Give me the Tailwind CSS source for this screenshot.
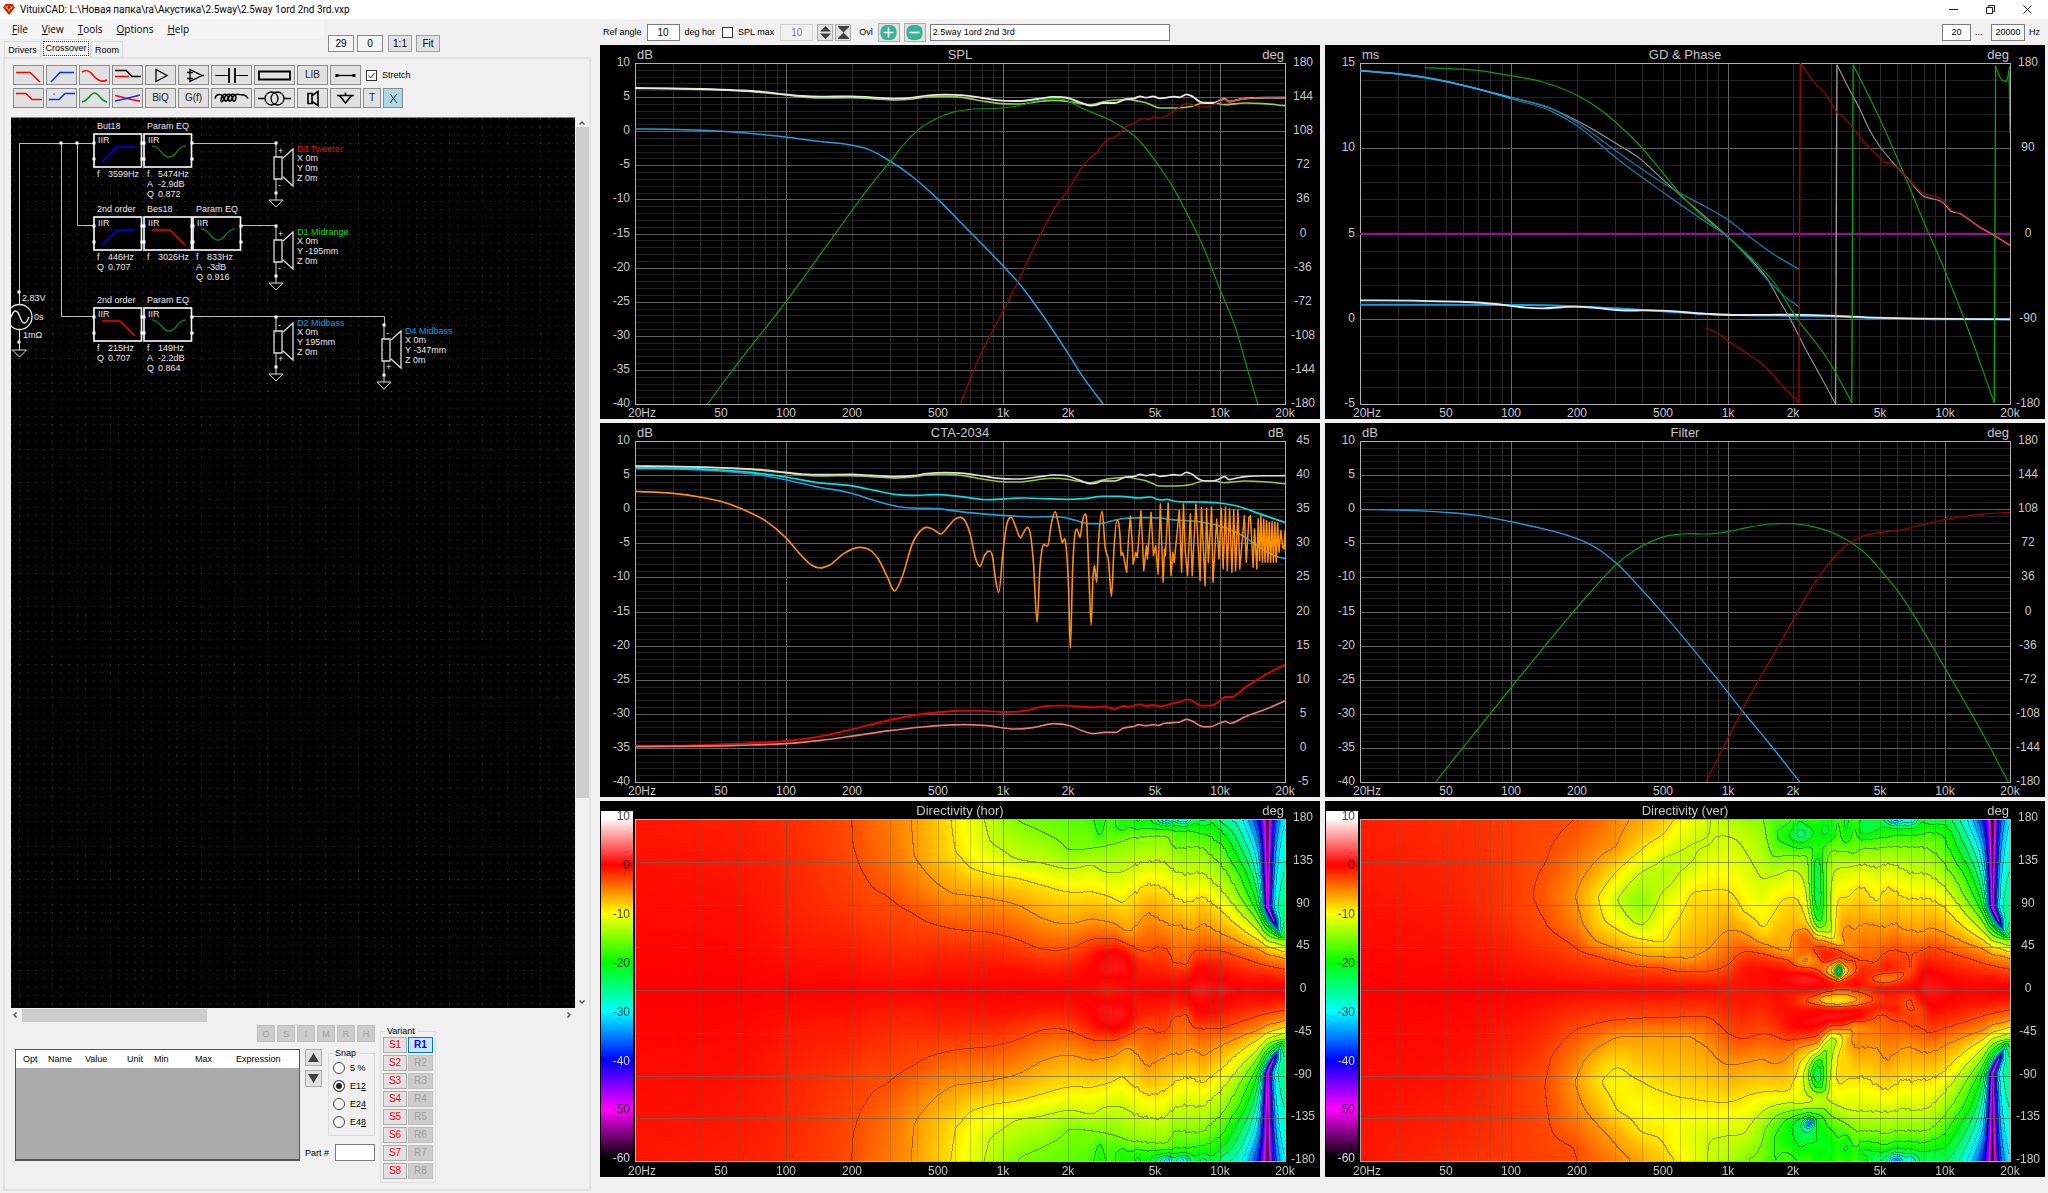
<!DOCTYPE html>
<html lang="en">
<head>
  <meta charset="UTF-8" />
  <meta name="viewport" content="width=device-width, initial-scale=1" />
  <title>VituixCAD</title>
  <script src="https://cdn.jsdelivr.net/npm/@tailwindcss/browser@4"></script>
</head>
<body class="min-h-screen flex flex-col bg-[#f0f0f0] text-black font-['Liberation_Sans',Arial,sans-serif] text-[10px] leading-3">

  <!-- Title bar -->
  <header class="h-[19px] bg-white flex items-center justify-between pl-[3px] pr-4">
    <div class="flex items-center gap-[5px]">
      <svg class="w-3 h-[11px]" viewBox="0 0 12 11"><path d="M2.5 0h7L12 3.5 6 11 0 3.5z" fill="#d81a10"/><path d="M2 2.5h8L8.6 5H3.4z" fill="#ffd21c"/><path d="M4.5 5h3L6 8z" fill="#ffb000"/><path d="M4 3.5L6 2l2 1.5-2 2z" fill="#a01008"/></svg>
      <h1 class="text-[10px] font-['Roboto',sans-serif]">VituixCAD: L:\Новая папка\ra\Акустика\2.5way\2.5way 1ord 2nd 3rd.vxp</h1>
    </div>
    <div class="flex items-center gap-7">
      <button aria-label="Minimize"><svg class="w-[9px] h-[9px]" viewBox="0 0 9 9"><path d="M0 4.5h9" stroke="#222"/></svg></button>
      <button aria-label="Restore"><svg class="w-[9px] h-[9px]" viewBox="0 0 9 9" fill="none" stroke="#222"><path d="M.5 2.5h6v6h-6zM2.5 2.5v-2h6v6h-2"/></svg></button>
      <button aria-label="Close"><svg class="w-[9px] h-[9px]" viewBox="0 0 9 9"><path d="M.5.5l8 8M8.5.5l-8 8" stroke="#222"/></svg></button>
    </div>
  </header>

  <div class="flex flex-1">
    <!-- Left pane -->
    <section class="w-[600px] shrink-0 flex flex-col pb-[2px]">
      <div class="flex h-[38px]">
        <div class="w-[324px] flex flex-col">
          <nav class="h-5 bg-[#f4f4f4] flex items-center gap-[14px] pl-3 font-['Open_Sans',sans-serif]">
            <button><u>F</u>ile</button><button><u>V</u>iew</button><button><u>T</u>ools</button><button><u>O</u>ptions</button><button><u>H</u>elp</button>
          </nav>
          <div class="flex items-end flex-1 pl-1 text-[9px]">
            <button class="h-4 w-[37px] border border-b-0 border-[#dcdcdc]">Drivers</button>
            <button class="h-[18px] w-[50px] bg-[#f9f9f9] border border-b-0 border-[#dcdcdc] p-px"><span class="block border border-dotted border-[#333] leading-[13px]">Crossover</span></button>
            <button class="h-4 w-8 border border-b-0 border-[#dcdcdc]">Room</button>
          </div>
        </div>
        <div class="flex items-end gap-[3px] pl-1 pb-[5px]">
          <input aria-label="Columns" value="29" class="w-[26px] h-[17px] border border-[#8a8a8a] bg-[#f4f4f4] text-center">
          <input aria-label="Rows" value="0" class="w-[26px] h-[17px] border border-[#8a8a8a] bg-[#f4f4f4] text-center">
          <button class="w-6 h-[17px] ml-[2px] border border-[#a0a0a0] bg-[#e1e1e1]">1:1</button>
          <button class="w-6 h-[17px] ml-px border border-[#a0a0a0] bg-[#e1e1e1]">Fit</button>
        </div>
      </div>

      <div class="ml-[3px] mr-[9px] flex-1 flex flex-col border-2 border-[#e2e2e2] bg-[#f0f0f0]">
        <!-- Part toolbar -->
        <div class="flex flex-col gap-[3px] pl-2 pt-[6px] pb-[9px]">
          <div id="tools1" class="flex items-center gap-[2px]"></div>
          <div id="tools2" class="flex items-center gap-[2px]"></div>
        </div>

        <!-- Schematic -->
        <div class="flex flex-1 pl-[6px]">
          <div class="flex-1 bg-black relative overflow-hidden border-t border-[#808080]">
            <svg id="schematic" class="absolute inset-0 w-full h-full" viewBox="11 118 565 890" preserveAspectRatio="xMinYMin slice"></svg>
          </div>
          <div class="w-[14px] flex flex-col items-center justify-between py-[2px]">
            <svg class="w-2 h-2" viewBox="0 0 8 8"><path d="M1.5 5.5L4 3l2.5 2.5" fill="none" stroke="#555" stroke-width="1.5"/></svg>
            <div class="w-[13px] flex-1 flex flex-col"><div class="h-[77%] bg-[#cdcdcd]"></div></div>
            <svg class="w-2 h-2" viewBox="0 0 8 8"><path d="M1.5 2.5L4 5l2.5-2.5" fill="none" stroke="#555" stroke-width="1.5"/></svg>
          </div>
        </div>
        <div class="h-[14px] pl-[6px] pr-4 flex items-center">
          <svg class="w-2 h-2 mr-[3px]" viewBox="0 0 8 8"><path d="M5.5 1.5L3 4l2.5 2.5" fill="none" stroke="#555" stroke-width="1.5"/></svg>
          <div class="flex-1"><div class="w-[34%] h-[13px] bg-[#cdcdcd]"></div></div>
          <svg class="w-2 h-2" viewBox="0 0 8 8"><path d="M2.5 1.5L5 4 2.5 6.5" fill="none" stroke="#555" stroke-width="1.5"/></svg>
        </div>

        <!-- Part values, snap, variants -->
        <div class="flex items-start gap-[5px] pl-[10px] pt-[3px] pb-[6px] text-[9px]">
          <div class="w-[360px]">
            <div id="modes" class="flex justify-end gap-[2px]"></div>
            <div class="flex gap-[5px] pt-[7px]">
              <div class="w-[285px] h-[112px] border border-[#555] border-b-2 bg-[#ababab]">
                <table class="w-full bg-white table-fixed">
                  <thead>
                    <tr class="h-[18px] text-left">
                      <th class="font-normal w-8 pl-[7px]">Opt</th><th class="font-normal w-[37px]">Name</th><th class="font-normal w-[42px]">Value</th><th class="font-normal w-[27px]">Unit</th><th class="font-normal w-[41px]">Min</th><th class="font-normal w-[41px]">Max</th><th class="font-normal">Expression</th>
                    </tr>
                  </thead>
                  <tbody></tbody>
                </table>
              </div>
              <div class="flex-1 flex flex-col justify-between">
                <div class="flex gap-[6px]">
                  <div class="flex flex-col gap-1">
                    <button aria-label="Up" class="w-[17px] h-[17px] border border-[#adadad] bg-[#e1e1e1] flex items-center justify-center"><svg class="w-[11px] h-[9px]" viewBox="0 0 11 9"><path d="M5.5 0L11 9H0z" fill="#404040"/></svg></button>
                    <button aria-label="Down" class="w-[17px] h-[17px] border border-[#adadad] bg-[#e1e1e1] flex items-center justify-center"><svg class="w-[11px] h-[9px]" viewBox="0 0 11 9"><path d="M5.5 9L11 0H0z" fill="#404040"/></svg></button>
                  </div>
                  <fieldset class="flex-1 h-[89px] border border-[#dcdcdc] pl-1 -mt-[2px]">
                    <legend class="px-[2px]">Snap</legend>
                    <label class="flex items-center gap-[5px] h-[18px]"><input type="radio" name="snap" class="appearance-none w-3 h-3 rounded-full border border-[#444] bg-white checked:bg-[#222] checked:ring-2 checked:ring-inset checked:ring-white">5 %</label>
                    <label class="flex items-center gap-[5px] h-[18px]"><input type="radio" name="snap" checked class="appearance-none w-3 h-3 rounded-full border border-[#444] bg-white checked:bg-[#222] checked:ring-2 checked:ring-inset checked:ring-white"><span>E1<u>2</u></span></label>
                    <label class="flex items-center gap-[5px] h-[18px]"><input type="radio" name="snap" class="appearance-none w-3 h-3 rounded-full border border-[#444] bg-white checked:bg-[#222] checked:ring-2 checked:ring-inset checked:ring-white"><span>E2<u>4</u></span></label>
                    <label class="flex items-center gap-[5px] h-[18px]"><input type="radio" name="snap" class="appearance-none w-3 h-3 rounded-full border border-[#444] bg-white checked:bg-[#222] checked:ring-2 checked:ring-inset checked:ring-white"><span>E4<u>8</u></span></label>
                  </fieldset>
                </div>
                <label class="flex items-center justify-between">Part # <input class="w-10 h-[17px] border border-[#7a7a7a] bg-white"></label>
              </div>
            </div>
          </div>
          <fieldset class="border border-[#dcdcdc] px-[2px] pb-[3px]">
            <legend class="px-[2px] ml-[2px]">Variant</legend>
            <div id="variants" class="flex flex-col gap-[2px]"></div>
          </fieldset>
        </div>
      </div>
    </section>

    <!-- Right pane -->
    <main class="flex-1 min-w-0 pr-[3px]">
      <div class="h-[26px] flex items-center justify-between pl-[3px] pr-[2px] text-[9px]">
        <div class="flex items-center flex-1">
          <label class="flex items-center gap-[5px] mr-[5px]">Ref angle <input value="10" class="w-[33px] h-[17px] border border-[#7a7a7a] bg-white text-center text-[10px]"></label>
          <span class="mr-[7px]">deg hor</span>
          <label class="flex items-center gap-[5px]"><input type="checkbox" class="appearance-none w-[11px] h-[11px] border border-[#333] bg-white">SPL max</label>
          <input aria-label="SPL max value" disabled value="10" class="w-[33px] h-[17px] ml-[6px] border border-[#cfcfcf] bg-[#f0f0f0] text-center text-[10px] text-[#838383]">
          <button aria-label="Shift scale" class="w-4 h-[17px] ml-1 border border-[#adadad] bg-[#e1e1e1] flex items-center justify-center"><svg class="w-[11px] h-[13px]" viewBox="0 0 11 13"><path d="M5.5 0L11 5.5H0zM5.5 13L11 7.5H0z" fill="#404040"/></svg></button>
          <button aria-label="Fit scale" class="w-4 h-[17px] ml-[2px] border border-[#adadad] bg-[#e1e1e1] flex items-center justify-center"><svg class="w-[11px] h-[13px]" viewBox="0 0 11 13"><path d="M0 1h11L5.5 6.5zM0 12h11L5.5 6.5zM0 0h11v1H0zM0 12h11v1H0z" fill="#404040"/></svg></button>
          <span class="ml-2 mr-[5px]">Ovl</span>
          <button aria-label="Add overlay" class="w-[22px] h-[19px] border border-[#adadad] bg-[#e1e1e1] flex items-center justify-center"><svg class="w-[17px] h-[15px]" viewBox="0 0 17 15"><rect x=".5" width="16" height="15" rx="6" fill="#35b597"/><path d="M3.5 7.5h10M8.5 2.5v10" stroke="#fff" stroke-width="1.6"/></svg></button>
          <button aria-label="Remove overlay" class="w-[22px] h-[19px] ml-1 border border-[#adadad] bg-[#e1e1e1] flex items-center justify-center"><svg class="w-[17px] h-[15px]" viewBox="0 0 17 15"><rect x=".5" width="16" height="15" rx="6" fill="#35b597"/><path d="M3.5 7.5h10" stroke="#fff" stroke-width="1.6"/></svg></button>
          <input aria-label="Overlay name" value="2.5way 1ord 2nd 3rd" class="w-60 h-[17px] ml-1 px-[2px] border border-[#7a7a7a] bg-white">
        </div>
        <div class="flex items-center gap-1">
          <input aria-label="Lower frequency" value="20" class="w-[29px] h-[17px] border border-[#7a7a7a] bg-white text-center">
          <span class="w-2 mr-1">...</span>
          <input aria-label="Upper frequency" value="20000" class="w-[34px] h-[17px] border border-[#7a7a7a] bg-white text-center">
          <span class="w-[14px]">Hz</span>
        </div>
      </div>
      <div id="charts" class="grid grid-cols-2 gap-x-[5px] gap-y-1"></div>
    </main>
  </div>

  <script>
    // ---------- part toolbar ----------
    const icon = (w, body, stroke = "#000", sw = 1.3) =>
      `<svg width="${w}" height="18" viewBox="0 0 ${w} 18" fill="none" stroke="${stroke}" stroke-width="${sw}">${body}</svg>`;
    const tools1 = [
      ["Low pass", "w-[31px]", icon(29, '<path d="M2 6.5h14l10 9.500"/>', "#f00", 1.6)],
      ["High pass", "w-[31px]", icon(29, '<path d="M4 16l9-9.500h14"/>', "#03f", 1.6)],
      ["All pass", "w-[31px]", icon(29, '<path d="M2 6c5-3 8-1 11 3s8 8 14 5"/>', "#f00", 1.6)],
      ["Shelf", "w-[31px]", icon(29, '<path d="M2 10.500h14" stroke="#f00"/><path d="M2 4.500h11l6 6h9"/>', "#000", 1.6)],
      ["Buffer", "w-[31px]", icon(29, '<path d="M10 3.500v12l11-6z"/>')],
      ["Op amp", "w-[31px]", icon(29, '<path d="M11 3.500v12l12-6zM8 6.500h6M8 12.500h6M22 9.500h3M11 5v3"/>')],
      ["Capacitor", "w-[41px]", icon(39, '<path d="M3 9.500h14M23 9.500h13" stroke-width="1"/><path d="M17 2v15M23 2v15" stroke-width="1.800"/>')],
      ["Resistor", "w-[41px]", icon(39, '<path d="M4 5.500h31v8H4z" stroke-width="1.800"/>')],
      ["Library", "w-[31px]", "LIB"],
      ["Wire", "w-[31px]", icon(29, '<path d="M6 9.500h17"/><path d="M4.500 8h3v3h-3zM21.500 8h3v3h-3z" fill="#000" stroke="none"/>')]
    ];
    const tools2 = [
      ["Low shelf", "w-[31px]", icon(29, '<path d="M2 4.500h10l6 6h10"/>', "#f00", 1.6)],
      ["High shelf", "w-[31px]", icon(29, '<path d="M2 10.500h10l6-6h10M7 4.500v1"/>', "#03f", 1.6)],
      ["Peak", "w-[31px]", icon(29, '<path d="M2 13c7-1 8-9 12.500-9S20 12 27 13"/>', "#0a8a2a", 1.6)],
      ["Crossover", "w-[31px]", icon(29, '<path d="M2 6.500c9 2 16 4 25 5.500" stroke="#f00"/><path d="M2 12c9-2 16-3.500 25-6" stroke="#22f"/>', "#000", 1.6)],
      ["Biquad", "w-[31px]", "BiQ"],
      ["Gain", "w-[31px]", "G(f)"],
      ["Inductor", "w-[41px]", icon(39, '<path d="M3 9.500c1-5 6-5 8-2 2 4-2 7-2 4s2-7 5-6c4 1 1 9-1 6s2-7 5-6c4 1 1 9-1 6s2-7 5-6c4 1 1 9-1 6s2-7 6-6c4 0 7 0 9 4" stroke-width="1.500"/>')],
      ["Transformer", "w-[41px]", icon(39, '<circle cx="16.500" cy="9.500" r="6.500"/><circle cx="22.500" cy="9.500" r="6.500"/><path d="M3 9.500h7M29 9.500h7"/>')],
      ["Driver", "w-[31px]", icon(29, '<path d="M10 4.500h4v10h-4zM14 6.500l6-4v14l-6-4" stroke-width="1.600"/>')],
      ["Ground", "w-[31px]", icon(29, '<path d="M6 6.500h17M8.500 6.500l6 7.500 6-7.500M14.500 3.500v3" stroke-width="1.500"/>')],
      ["Text", "w-[18px]", "T"]
    ];
    const toolButton = ([name, w, face]) =>
      `<button aria-label="${name}" class="${w} h-5 border border-[#8c8c8c] bg-[#e1e1e1] text-[#222] flex items-center justify-center">${face}</button>`;
    document.getElementById("tools1").innerHTML = tools1.map(toolButton).join("") +
      `<label class="flex items-center gap-[5px] pl-[3px] text-[9px]"><span class="relative flex"><input type="checkbox" checked class="appearance-none w-[11px] h-[11px] border border-[#333] bg-white"><svg class="absolute inset-0 w-[11px] h-[11px]" viewBox="0 0 11 11"><path d="M2.500 5.500l2 2.500 4-5" fill="none" stroke="#222"/></svg></span>Stretch</label>`;
    document.getElementById("tools2").innerHTML = tools2.map(toolButton).join("") +
      `<button aria-label="Delete" class="w-5 h-5 border border-[#8c8c8c] bg-[#add8e6] flex items-center justify-center"><svg width="9" height="9" viewBox="0 0 9 9"><path d="M1 0l7 9M8 0L1 9" stroke="#333"/></svg></button>`;

    document.getElementById("modes").innerHTML = [..."OSIMRH"].map(c =>
      `<button disabled class="w-[18px] h-[17px] border border-[#bfbfbf] bg-[#cccccc] text-[#a0a0a0]">${c}</button>`).join("");
    document.getElementById("variants").innerHTML = [1, 2, 3, 4, 5, 6, 7, 8].map(n =>
      `<div class="flex gap-px"><button class="w-6 h-4 border border-[#adadad] bg-[#e1e1e1] text-[#f00] text-[10px]">S${n}</button>` +
      (n === 1
        ? `<button class="w-[25px] h-4 border border-[#0078d7] bg-[#cce4f7] text-[#00f] text-[10px] font-bold">R1</button></div>`
        : `<button disabled class="w-[25px] h-4 border border-[#bfbfbf] bg-[#cccccc] text-[#a0a0a0] text-[10px]">R${n}</button></div>`)).join("");

    // ---------- schematic ----------
    const text = (x, y, s, fill = "#e8e8e8") => `<text x="${x}" y="${y}" fill="${fill}">${s}</text>`;
    const dot = (x, y) => `<rect x="${x - 1.5}" y="${y - 1.5}" width="3" height="3" fill="#fff"/>`;
    const ground = (x, y) => `<path d="M${x - 7} ${y}h14l-7 7z" fill="none" stroke="#ddd"/>`;
    const shapes = {
      hp: '<path d="M8 28l15-15h18" stroke="#00f"/>',
      lp: '<path d="M8 13h18l15 15" stroke="#f00"/>',
      eq: '<path d="M8 12c9 0 9 11 17 11s8-11 17-11" stroke="#0a7a0a"/>'
    };
    const block = (x, y, title, shape, params) =>
      `<g transform="translate(${x} ${y - 9})"><rect width="47.500" height="33" fill="#000" stroke="#fff" stroke-width="1.600"/><g fill="none" stroke-width="1.500">${shapes[shape]}</g></g>` +
      dot(x, y) + dot(x, y + 16) + dot(x + 48, y) + dot(x + 48, y + 16) +
      text(x + 4, y, "IIR") + text(x + 3, y - 14, title) +
      params.map(([k, v], i) => text(x + 3, y + 34 + i * 10, k) + text(x + 14, y + 34 + i * 10, v)).join("");
    const driver = (x, y, name, color, pos, flip) =>
      `<path d="M${x} ${y}v14M${x} ${y + 36}v21" stroke="#ddd"/><path d="M${x - 2} ${y + 14}h8v22h-8zM${x + 7} ${y + 15}l10-9v37l-10-9" fill="none" stroke="#ddd" stroke-width="1.300"/>` +
      dot(x, y) + dot(x, y + 50) + ground(x, y + 57) +
      text(x + 2, y + 11, flip ? "-" : "+") + text(x + 2, y + 45, flip ? "+" : "-") +
      text(x + 21, y + 9, name, color) + pos.map((p, i) => text(x + 21, y + 18 + i * 10, p)).join("");

    document.getElementById("schematic").innerHTML = `
      <defs><pattern id="dots" x="19" y="143" width="8.270" height="8.270" patternUnits="userSpaceOnUse"><rect width="1" height="1" fill="#555"/></pattern></defs>
      <rect x="11" y="118" width="565" height="890" fill="url(#dots)"/>
      <g font-family="Liberation Sans, Arial, sans-serif" font-size="9">
        <path d="M19.500 292V143.500H94M61.500 143.500V316.500H94M77.500 143.500V225.500H94M142 143.500H276.500M241 225.500h35M142 316.500H384.500v9" fill="none" stroke="#bbb"/>
        ${dot(61, 143)}${dot(77, 143)}${dot(19, 292)}${dot(19, 342)}
        <path d="M19.500 292v12M19.500 330v20" stroke="#ddd"/><circle cx="19.500" cy="317" r="12.500" fill="none" stroke="#eee" stroke-width="1.300"/>
        <path d="M11 317c3-8 6-8 9 0s6 8 9 0" fill="none" stroke="#eee" stroke-width="1.300"/>
        ${ground(19.5, 350)}${text(22, 301, "2.83V")}${text(34, 320, "0s")}${text(23, 338, "1mΩ")}
        ${block(94, 143, "But18", "hp", [["f", "3599Hz"]])}
        ${block(144, 143, "Param EQ", "eq", [["f", "5474Hz"], ["A", "-2.9dB"], ["Q", "0.872"]])}
        ${block(94, 226, "2nd order", "hp", [["f", "446Hz"], ["Q", "0.707"]])}
        ${block(144, 226, "Bes18", "lp", [["f", "3026Hz"]])}
        ${block(193, 226, "Param EQ", "eq", [["f", "833Hz"], ["A", "-3dB"], ["Q", "0.916"]])}
        ${block(94, 317, "2nd order", "lp", [["f", "215Hz"], ["Q", "0.707"]])}
        ${block(144, 317, "Param EQ", "eq", [["f", "149Hz"], ["A", "-2.2dB"], ["Q", "0.864"]])}
        ${driver(276, 143, "D3 Tweeter", "#f00", ["X 0m", "Y 0m", "Z 0m"])}
        ${driver(276, 226, "D1 Midrange", "#00e000", ["X 0m", "Y -195mm", "Z 0m"])}
        ${driver(276, 317, "D2 Midbass", "#00a0f0", ["X 0m", "Y 195mm", "Z 0m"], true)}
        ${driver(384, 325, "D4 Midbass", "#00a0f0", ["X 0m", "Y -347mm", "Z 0m"], true)}
      </g>`;

    // ---------- charts ----------
    const PL = 35, PW = 650, PT = 18;
    const fx = f => PL + PW * Math.log10(f / 20) / 3;

    // cubic through a flat list of x,y pairs, flat at local extremes
    function smooth(p) {
      const n = p.length / 2;
      const slope = i => {
        if (i === 0 || i === n - 1) return 0;
        const dx0 = p[2 * i] - p[2 * i - 2], dx1 = p[2 * i + 2] - p[2 * i];
        const s0 = (p[2 * i + 1] - p[2 * i - 1]) / dx0, s1 = (p[2 * i + 3] - p[2 * i + 1]) / dx1;
        return s0 * s1 <= 0 ? 0 : (s0 * dx1 + s1 * dx0) / (dx0 + dx1);
      };
      let d = `M${p[0]} ${p[1]}`;
      for (let i = 0; i < n - 1; i++) {
        const x0 = p[2 * i], y0 = p[2 * i + 1], x1 = p[2 * i + 2], y1 = p[2 * i + 3], h = (x1 - x0) / 3;
        const c0 = i === 0 ? y0 + (y1 - y0) / 3 : y0 + slope(i) * h;
        const c1 = i === n - 2 ? y1 - (y1 - y0) / 3 : y1 - slope(i + 1) * h;
        d += `C${x0 + h} ${c0} ${x1 - h} ${c1} ${x1} ${y1}`;
      }
      return d;
    }
    const straight = p => "M" + p.join(" ");

    const whiteSpl = [78,265,150,266,220,268,300,272,350,276,404,284,440,289,480,291,545,290,590,293,640,297,680,294,710,288,750,285,790,287,830,295,873,303,910,304,950,298,985,292,1015,295,1040,307,1065,318,1080,315,1090,310,1117,310,1140,299,1160,296,1172,290,1185,294,1200,290,1215,296,1230,294,1245,291,1258,293,1273,284,1285,290,1300,305,1312,310,1330,310,1345,303,1355,297,1365,306,1385,300,1400,297,1486,294];
    const limeSpl = [78,266,150,267,220,269,300,273,350,278,404,286,440,292,480,295,545,294,590,297,640,301,680,298,710,292,750,290,790,294,830,304,873,312,910,313,950,306,985,302,1015,305,1040,311,1065,315,1090,307,1120,301,1143,299,1170,305,1185,309,1200,318,1213,325,1250,325,1285,320,1310,309,1330,309,1355,315,1400,310,1440,312,1486,318];
    const down = (p, dy) => p.map((v, i) => i % 2 ? v - dy : v);

    // CTA-2034 difference trace: rounded ripple first, then the dense comb
    const ripple = [78,217,160,223,215,233,263,247,310,270,360,305,404,355,440,412,460,438,478,447,500,438,530,404,563,385,590,396,605,420,625,475,640,516,655,480,680,370,695,337,710,325,725,332,740,345,755,325,770,302,782,295,793,306,805,350,815,415,825,442,835,410,843,397,852,410,860,490,866,520,875,400,882,325,893,295,903,325,913,356,920,340,928,325,935,350,941,430,949,610,955,450,960,388,967,379,972,381,979,320,988,278,996,320,1003,368,1011,373,1017,500,1021,688,1026,450,1031,345,1035,330,1042,355,1047,310,1052,287,1056,300,1061,460,1066,618,1070,480,1073,440,1078,490,1082,370,1090,277,1096,380,1104,430,1110,532,1116,380,1122,303,1128,340,1131,410];
    const comb = [1131,410,1134,400,1137,415,1143,460,1147,360,1151,292,1155,370,1157,435,1163,400,1166,415,1174,275,1177,360,1180,455,1186,380,1188,420,1196,280,1201,410,1206,380,1211,465,1216,255,1222,490,1225,390,1227,410,1233,252,1239,470,1243,400,1246,430,1257,273,1262,460,1266,255,1270,400,1275,470,1281,285,1285,470,1293,255,1302,485,1305,265,1313,500,1316,268,1320,430,1327,265,1330,490,1338,300,1343,420,1348,268,1352,450,1357,265,1361,455,1366,270,1371,460,1375,272,1379,455,1384,273,1388,450,1398,290,1402,430,1408,295,1411,290,1417,445,1420,330,1425,450,1428,300,1431,425,1434,290,1437,430,1440,300,1443,430,1446,305,1449,430,1452,310,1455,430,1458,308,1461,430,1464,310,1467,430,1470,312,1473,400,1477,335,1481,385,1484,390,1486,335];

    const dbLeft = ["10", "5", "0", "-5", "-10", "-15", "-20", "-25", "-30", "-35", "-40"];
    const degRight = ["180", "144", "108", "72", "36", "0", "-36", "-72", "-108", "-144", "-180"];
    const blue = "#1c9fe0", green = "#00a000", red = "#a80000";

    const charts = [
      { title: "SPL", l: "dB", r: "deg", left: dbLeft, right: degRight, minor: 5, view: "78 190 1408 1023", lines: [
        [limeSpl, "#9acd32", 1.6], [whiteSpl, "#e8e8e8", 1.8],
        [[78,388,150,389,220,392,300,398,350,404,404,412,470,424,545,436,585,450,630,484,680,532,735,600,800,692,873,795,908,848,950,925,1015,1059,1045,1125,1092,1213], blue, 1.5],
        [[235,1213,300,1092,404,908,500,725,600,537,630,487,660,435,690,392,730,357,765,338,800,330,873,325,905,319,940,306,985,296,1015,303,1045,325,1080,345,1110,363,1140,388,1175,430,1202,478,1240,555,1275,645,1310,745,1343,862,1380,990,1405,1110,1427,1213], green, 1.2],
        [[783,1213,820,1085,873,940,908,845,950,722,985,630,1015,573,1050,495,1080,455,1100,420,1120,410,1140,382,1160,371,1175,356,1190,360,1202,351,1215,355,1245,335,1262,318,1275,310,1290,319,1315,322,1345,305,1355,300,1365,307,1385,301,1400,297], red, 1.2],
        [[1345,303,1355,298,1365,306,1385,300,1400,297,1486,294], "#ee5050", 1.6] ] },
      { title: "GD &amp; Phase", l: "ms", r: "deg", left: ["15", "10", "5", "0", "-5"], right: ["180", "90", "0", "-90", "-180"], minor: 5, view: "87 190 1401 1023", lines: [
        [[87,702,1488,702], "#a000a0", 2],
        [[87,915,412,916,520,918,640,926,740,935,830,943,1000,948,1100,950,1200,955,1300,958,1488,959], "#0aa0e6", 2],
        [[87,902,200,903,300,906,380,913,430,922,480,926,550,921,590,924,640,931,740,933,830,942,900,946,1020,945,1100,948,1200,954,1300,957,1488,959], "#e8e8e8", 1.8],
        [[87,213,170,223,250,239,330,264,412,293,500,327,555,363,640,432,693,480,740,540,780,590,830,650,880,712,930,780,965,838,990,900,1015,960,1050,1055,1080,1130,1112,1213], "#9a9a9a", 1.1],
        [[1112,1213,1115,195], "#9a9a9a", 1.4, 1],
        [[1115,195,1140,265,1165,330,1185,390,1210,445,1250,510,1270,540,1300,588,1320,597,1343,608,1360,634,1380,642,1420,680,1455,708,1488,737], "#9a9a9a", 1.1],
        [[87,213,170,223,250,239,330,264,412,297,500,335,555,378,640,476,740,578,830,665,880,712,930,785,965,840,1000,887,1033,922], "#1180b0", 1.2],
        [[87,213,170,223,250,239,330,265,412,294,500,327,555,369,640,455,740,550,780,583,830,620,880,660,930,715,970,756,1033,809], "#1180b0", 1.2],
        [[87,213,170,223,250,239,330,264,412,295], "#28a8e8", 1.8],
        [[227,204,340,212,412,228,480,247,555,287,600,325,640,370,693,442,740,520,780,588,830,655,880,712,930,775,980,850,1033,965,1070,1030,1100,1090,1147,1209], green, 1.2],
        [[1147,1209,1150,195], "#00b000", 1.3, 1],
        [[1150,195,1205,350,1260,525,1300,660,1347,810,1390,960,1454,1209], green, 1.2],
        [[1454,1209,1457,198], "#00b000", 1.3, 1],
        [[1457,198,1463,222,1470,240,1478,245,1483,235,1487,200], green, 1.2],
        [[1486,215,1488,400], "#00b000", 1.3, 1],
        [[832,985,850,995,880,1023,920,1060,960,1100,1000,1162,1033,1209], red, 1.2],
        [[1033,1209,1036,190], "#b80000", 1.3, 1],
        [[1036,190,1070,255,1090,282,1115,338,1130,353,1155,395,1185,445,1200,463,1215,486,1230,490,1250,510,1270,540,1300,580,1330,592,1343,602,1362,631,1380,640], red, 1.2],
        [[1380,640,1420,680,1455,708,1488,737], "#e04040", 1.4] ] },
      { title: "CTA-2034", l: "dB", r: "dB", left: dbLeft, right: ["45", "40", "35", "30", "25", "20", "15", "10", "5", "0", "-5"], minor: 5, view: "78 66 1408 1023", lines: [
        [down(limeSpl, 124), "#9acd32", 1.5], [down(whiteSpl, 124), "#e0e0e0", 1.6],
        [[78,149,200,151,263,156,330,164,404,182,470,203,545,222,600,246,650,263,680,267,732,269,800,281,873,289,940,294,1005,295,1030,303,1060,314,1085,314,1120,302,1180,296,1215,297,1240,302,1300,308,1343,320,1380,340,1410,365,1445,397,1470,413,1486,419], blue, 1.6],
        [[78,146,200,149,263,153,330,160,404,174,470,190,545,200,600,215,640,226,680,229,732,227,780,232,840,242,920,237,1015,241,1050,239,1090,232,1130,232,1170,237,1185,235,1195,234,1210,241,1220,243,1230,241,1245,246,1300,249,1343,252,1390,264,1430,284,1486,310], "#00e0e8", 1.7],
        [ripple, "#ff9000", 1.6],
        [comb, "#ff9000", 1.5, 1],
        [[78,980,200,979,300,974,404,966,480,952,545,932,630,903,700,885,770,876,820,875,880,879,920,876,960,863,1010,860,1070,865,1093,862,1117,870,1135,861,1150,863,1170,856,1185,861,1200,858,1215,862,1240,854,1260,848,1273,841,1285,846,1305,860,1325,860,1345,845,1357,834,1370,834,1400,805,1440,770,1486,737], "#e80000", 1.8],
        [[78,983,300,979,404,974,480,964,545,952,630,935,700,924,790,917,840,920,900,930,940,926,985,914,1020,920,1050,937,1070,944,1095,940,1120,940,1135,928,1160,922,1170,917,1185,920,1200,917,1213,919,1225,913,1245,911,1260,908,1273,901,1285,906,1305,922,1325,923,1345,912,1357,907,1367,913,1400,893,1440,873,1486,846], "#f07878", 1.6] ] },
      { title: "Filter", l: "dB", r: "deg", left: dbLeft, right: degRight, minor: 5, view: "87 66 1401 1023", lines: [
        [[87,271,180,274,272,280,340,289,412,308,480,329,520,343,555,359,600,390,642,436,693,510,740,583,880,820,915,882,970,975,1035,1089], blue, 1.3],
        [[250,1089,412,807,540,590,580,525,640,436,680,393,710,370,745,352,780,345,850,344,880,338,920,326,970,315,1020,314,1060,322,1100,338,1140,366,1180,408,1207,450,1250,523,1300,633,1347,745,1400,872,1440,972,1484,1089], green, 1.2],
        [[832,1089,880,958,930,823,975,715,1020,604,1060,507,1100,430,1140,374,1170,352,1207,341,1250,333,1300,317,1350,301,1400,290,1440,284,1488,280], red, 1.2] ] },
      { title: "Directivity (hor)", r: "deg", map: "hor" },
      { title: "Directivity (ver)", r: "deg", map: "ver" }
    ];

    function grid(c, top, h, heat) {
      let s = "";
      const rows = heat ? 8 : c.left.length - 1;
      const vline = (f, col) => `<path d="M${Math.round(fx(f)) + .5} ${top}v${h}" stroke="${col}"/>`;
      if (!heat) {
        const n = rows * c.minor;
        for (let i = 1; i < n; i++) s += `<path d="M${PL} ${Math.round(top + i * h / n) + .5}h${PW}" stroke="#222"/>`;
      }
      for (const d of [10, 100, 1000, 10000]) for (let k = 2; k < 10; k++) {
        const f = d * k;
        if (f > 20 && f < 20000) s += vline(f, heat ? "rgba(90,90,60,.3)" : "#2c2c2c");
      }
      for (const f of [100, 1000, 10000]) s += vline(f, heat ? "rgba(90,90,60,.6)" : "#6c6c6c");
      for (let i = 1; i < rows; i++) s += `<path d="M${PL} ${Math.round(top + i * h / rows) + .5}h${PW}" stroke="${heat ? "rgba(100,100,90,.7)" : "#606060"}"/>`;
      s += `<rect x="${PL}.5" y="${top}.5" width="${PW}" height="${h}" fill="none" stroke="#b0b0b0"/>`;
      return s;
    }

    function chart(c) {
      const heat = !!c.map, H = heat ? 376 : 374, h = heat ? 342 : 341, top = PT;
      const right = heat ? ["180", "135", "90", "45", "0", "-45", "-90", "-135", "-180"] : c.right;
      let s = `<svg class="block w-full h-auto bg-black" viewBox="0 0 720 ${H}" font-family="Liberation Sans, Arial, sans-serif" font-size="12" fill="#c8c8c8">`;
      if (heat) {
        s += `<defs><linearGradient id="bar-${c.map}" x2="0" y2="1"><stop offset=".02" stop-color="#fff"/><stop offset=".154" stop-color="#f00"/><stop offset=".293" stop-color="#ff0"/><stop offset=".433" stop-color="#0f0"/><stop offset=".573" stop-color="#0ff"/><stop offset=".713" stop-color="#00f"/><stop offset=".852" stop-color="#f0f"/><stop offset=".992" stop-color="#000"/></linearGradient></defs>
          <rect x="1" y="10" width="32" height="350" fill="url(#bar-${c.map})"/>
          <foreignObject x="${PL}" y="${top}" width="${PW}" height="${h}"><canvas id="map-${c.map}" width="650" height="342" class="block w-full h-full"></canvas></foreignObject>`;
        ["10", "0", "-10", "-20", "-30", "-40", "-50", "-60"].forEach((t, i) =>
          s += `<text x="30" y="${Math.round(19 + i * 48.9)}" text-anchor="end" fill="${i === 5 || i === 7 ? "#d8d8f0" : "rgba(0,0,0,.75)"}">${t}</text>`);
      } else {
        c.left.forEach((t, i) => s += `<text x="30" y="${Math.round(top + 3 + i * h / (c.left.length - 1))}" text-anchor="end">${t}</text>`);
        s += `<text x="37" y="14" font-size="13">${c.l}</text>`;
      }
      s += `<g shape-rendering="crispEdges">${grid(c, top, h, heat)}</g>`;
      right.forEach((t, i) => s += `<text x="703" y="${Math.round(top + (heat ? 2 : 3) + i * h / (right.length - 1))}" text-anchor="middle">${t}</text>`);
      s += `<text x="360" y="14" font-size="13" text-anchor="middle">${c.title}</text><text x="684" y="14" font-size="13" text-anchor="end">${c.r}</text>`;
      [[20, "20Hz"], [50, "50"], [100, "100"], [200, "200"], [500, "500"], [1000, "1k"], [2000, "2k"], [5000, "5k"], [10000, "10k"], [20000, "20k"]].forEach(([f, t]) =>
        s += `<text x="${Math.round(fx(f)) + (f === 20 ? 7 : 0)}" y="${H - 2}" text-anchor="middle">${t}</text>`);
      if (c.lines) {
        s += `<svg x="${PL}" y="${top}" width="${PW}" height="${h}" viewBox="${c.view}" preserveAspectRatio="none" fill="none">`;
        for (const [p, col, w, raw] of c.lines)
          s += `<path d="${raw ? straight(p) : smooth(p)}" stroke="${col}" stroke-width="${w}" stroke-linejoin="round" vector-effect="non-scaling-stroke"/>`;
        s += `</svg>`;
      }
      return s + `</svg>`;
    }
    document.getElementById("charts").innerHTML = charts.map(chart).join("");

    // ---------- directivity maps ----------
    // each column: x, then y,dB pairs from the top edge down
    const tail = [
      [1390, 68,-29, 180,-22, 235,-18, 300,-15, 350,-12, 395,-9, 440,-6, 483,-3, 540,-.6, 580,0],
      [1430, 68,-37, 150,-31, 220,-27, 290,-22, 340,-18, 385,-14, 415,-11, 445,-7.5, 470,-5, 502,-3, 550,-.5, 580,0],
      [1450, 68,-36, 150,-33, 250,-30, 330,-26, 370,-22, 410,-16, 440,-11, 470,-6.5, 509,-3, 550,-.4, 580,0],
      [1470, 68,-33, 150,-30, 250,-27, 340,-25, 380,-22, 415,-17, 445,-11.5, 480,-6, 515,-3, 560,-.3, 580,.2],
      [1490, 68,-29, 150,-27, 250,-26, 340,-24, 390,-21, 430,-16, 452,-12, 488,-6, 521,-3, 560,-.3, 580,.3]
    ];
    const hor = [
      [78, 68,-.8, 580,0],
      [300, 68,-1.2, 580,0],
      [430, 68,-1.9, 330,-1.4, 450,-.9, 580,0],
      [548, 68,-3, 150,-2.95, 330,-2.2, 580,0],
      [580, 68,-3.8, 180,-3.5, 245,-3, 330,-2.6, 450,-1.4, 580,-.1],
      [630, 68,-4.8, 190,-4.4, 305,-3, 450,-1.7, 580,-.1],
      [680, 68,-6.1, 180,-5.9, 270,-4.6, 350,-3, 450,-1.9, 580,-.1],
      [735, 68,-8, 180,-7.6, 265,-6, 388,-3, 480,-1.2, 580,0],
      [768, 68,-9.2, 170,-8.8, 292,-6, 398,-3, 490,-1.1, 580,0],
      [805, 68,-10.8, 150,-10.3, 215,-9, 298,-6, 404,-3, 500,-.9, 580,0],
      [850, 68,-12.6, 140,-12, 235,-9, 307,-6, 410,-3, 510,-.7, 580,0],
      [905, 68,-15, 190,-12, 245,-9, 325,-6, 430,-3, 520,-.6, 580,0],
      [970, 68,-15.8, 115,-15, 205,-12, 270,-9, 372,-6, 462,-3, 530,-.7, 580,0],
      [1020, 68,-16.5, 163,-15, 217,-12, 287,-9, 385,-6, 457,-3, 520,-.8, 580,0],
      [1070, 68,-17.6, 158,-15, 205,-12, 288,-9, 370,-6, 430,-3, 480,-.5, 530,.2, 580,-.4],
      [1085, 68,-20, 120,-18.1, 150,-15, 220,-12, 293,-9, 374,-6, 430,-3, 470,-.1, 520,.6, 580,-.8],
      [1100, 68,-17.8, 100,-17.2, 148,-15, 228,-12, 298,-9, 378,-6, 430,-3, 470,.1, 520,.7, 580,-1],
      [1120, 68,-17.9, 95,-18, 140,-15, 230,-12, 310,-9, 385,-6, 430,-3, 465,.1, 515,1, 550,-.1, 580,-.8],
      [1135, 68,-20, 105,-18, 130,-15, 226,-12, 320,-9, 402,-6, 438,-3, 475,0, 515,.8, 550,-.1, 580,-.5],
      [1150, 68,-19, 95,-18, 122,-15, 216,-12, 300,-9, 408,-6, 447,-3, 480,-.5, 510,.2, 580,-.3],
      [1168, 68,-22, 100,-18, 120,-15, 203,-12, 285,-9, 385,-6, 462,-3, 500,-1, 580,-.2],
      [1187, 68,-20, 98,-18, 117,-15, 198,-12, 265,-9, 352,-6, 468,-3, 520,-1, 580,0],
      [1215, 68,-27, 84,-21, 98,-18, 115,-15, 193,-12, 270,-9, 370,-6, 452,-3, 520,-1.3, 580,.4],
      [1235, 68,-35, 84,-22, 98,-18, 118,-15, 208,-12, 285,-9, 385,-6, 465,-3, 530,-1.2, 580,.2],
      [1245, 68,-26, 84,-21, 100,-18, 150,-15, 222,-12, 300,-9, 388,-6, 500,-3, 540,-1, 580,0],
      [1262, 68,-33, 84,-22, 100,-18, 155,-15, 230,-12, 312,-9, 386,-6, 505,-3, 540,-.8, 580,0],
      [1275, 68,-30, 84,-22, 100,-18, 152,-15, 234,-12, 319,-9, 398,-6, 508,-3, 540,-.5, 580,.2],
      [1290, 68,-22, 90,-20, 105,-18, 150,-15, 230,-12, 312,-9, 402,-6, 468,-3, 520,-.4, 560,.3, 580,.8],
      [1310, 68,-26, 90,-20, 112,-18, 153,-15, 232,-12, 302,-9, 383,-6, 465,-3, 510,-.3, 550,.2, 580,1.2],
      [1330, 68,-22, 90,-20, 125,-18, 180,-15, 256,-12, 322,-9, 400,-6, 465,-3, 510,-.5, 560,.1, 580,.4],
      [1355, 68,-26, 100,-22, 150,-18, 215,-15, 290,-12, 350,-9, 418,-6, 466,-3, 520,-.7, 560,.1, 580,.8],
      ...tail
    ];
    const flip = col => {
      const out = col.slice();
      for (let i = col.length - 2; i > 0; i -= 2) if (col[i] < 575) out.push(1164 - col[i], col[i + 1]);
      return out;
    };
    const ver = [
      [87, 68,-1.2, 580,0, 1096,-.8],
      [300, 68,-1.8, 300,-1.3, 580,0, 900,-1, 1096,-1.8],
      [400, 68,-2.2, 330,-2.2, 580,0, 860,-1.8, 1096,-2.2],
      [465, 68,-2.6, 240,-2.95, 300,-3.1, 400,-2.6, 580,-.1, 850,-2.7, 960,-2.6, 1096,-2.5],
      [490, 68,-2.6, 190,-3, 300,-3.7, 390,-3, 580,-.1, 780,-2.7, 870,-3.15, 930,-3, 1096,-2.6],
      [548, 68,-3, 140,-3.7, 190,-4.5, 300,-5.9, 380,-5, 452,-3, 580,-.1, 707,-3, 800,-5, 860,-5.9, 950,-5, 1060,-3, 1096,-2.9],
      [600, 68,-4, 140,-5, 200,-6.3, 300,-9, 380,-8.2, 440,-6, 480,-3, 580,-.1, 685,-3, 755,-6, 800,-7.6, 860,-8.8, 950,-7, 990,-6, 1096,-4],
      [640, 68,-5.3, 150,-6, 225,-9, 310,-12, 360,-10.7, 400,-9, 460,-6, 495,-3, 580,-.1, 675,-3, 725,-6, 815,-9, 870,-9.7, 945,-9, 1020,-6.6, 1096,-5.2],
      [690, 68,-6.5, 100,-7, 165,-9, 230,-12, 310,-14.5, 388,-12, 428,-9, 480,-6, 510,-3, 580,-.1, 670,-3, 722,-6, 855,-9, 930,-9.9, 1010,-9, 1060,-7.2, 1096,-6.5],
      [740, 68,-8, 115,-9, 185,-12, 235,-13, 285,-12, 350,-10.5, 441,-9, 485,-6, 515,-3, 580,-.1, 668,-3, 720,-6, 890,-9, 960,-10, 1045,-9, 1096,-8],
      [768, 68,-9.1, 160,-11.8, 200,-12.6, 245,-12, 330,-10, 380,-9, 430,-8, 488,-6, 525,-3, 580,-.1, 667,-3, 720,-6, 903,-9, 1000,-10.2, 1065,-10, 1096,-9.1],
      [800, 68,-10.6, 150,-12.1, 190,-12.2, 225,-11.4, 292,-9, 400,-7.6, 490,-6, 527,-3, 580,-.1, 664,-3, 722,-6, 912,-9, 1010,-11, 1096,-10.7],
      [835, 68,-11.8, 145,-12.1, 200,-11, 283,-9, 380,-7.5, 465,-6, 527,-3, 580,-.2, 665,-3, 755,-6, 920,-9, 1030,-11.9, 1096,-12],
      [880, 68,-13, 120,-12, 200,-10.8, 285,-9, 405,-6, 507,-3, 560,-.8, 610,-.8, 715,-3, 808,-6, 922,-9, 1020,-12, 1096,-13.2],
      [915, 68,-14, 120,-12.5, 200,-11.5, 350,-9, 412,-6, 468,-3, 520,-.6, 620,-.8, 732,-3, 802,-6, 905,-9, 1013,-12, 1096,-14.8],
      [955, 68,-15, 130,-14, 248,-12, 320,-10.4, 397,-9, 445,-6, 472,-3, 520,-.4, 580,-.5, 640,-1.5, 718,-3, 792,-6, 892,-9, 948,-12, 1000,-14.5, 1096,-16],
      [980, 68,-17, 120,-17.5, 182,-15, 238,-12, 312,-9.5, 350,-9, 460,-6, 482,-3, 530,0, 590,-.5, 660,-1, 722,-3, 806,-6, 890,-9, 932,-12, 965,-15, 1020,-18, 1096,-18],
      [1010, 68,-17, 118,-21, 175,-15, 222,-12, 303,-9, 400,-7, 472,-6, 492,-3, 545,.8, 600,-1, 660,-.4, 690,-.3, 735,-3, 780,-6, 888,-9, 925,-12, 950,-15, 985,-20, 1030,-20, 1096,-17],
      [1035, 68,-20, 115,-26, 150,-19, 177,-15, 232,-12, 322,-9, 395,-7, 415,-4, 440,-4, 478,-4, 495,-7, 512,-3, 545,1.5, 595,-1, 613,-3, 640,-.4, 690,.2, 732,-3, 755,-6, 800,-9, 870,-11, 920,-11, 950,-16, 985,-24, 1030,-22, 1060,-21, 1096,-18],
      [1052, 68,-18, 110,-24, 150,-18, 180,-15, 250,-14, 330,-12, 385,-9, 407,-5, 440,-3.2, 480,-5, 495,-7, 515,-3, 545,1.5, 590,-.8, 613,-4, 640,-.4, 690,.5, 728,-3, 750,-6, 775,-9, 830,-15, 880,-13, 920,-11, 955,-18, 985,-28, 1020,-23, 1060,-20, 1096,-18],
      [1073, 68,-19, 110,-20, 160,-18.5, 200,-23, 300,-24, 360,-20, 395,-15, 417,-9, 438,-5, 455,-2, 475,-2.5, 500,-5, 525,-3, 548,1, 590,-.8, 613,-7, 635,-.6, 680,.8, 720,-3, 742,-6, 765,-10, 800,-20, 840,-25, 875,-19, 905,-12, 930,-13, 970,-20, 1040,-21, 1096,-20],
      [1086, 68,-20, 105,-22, 150,-18, 200,-17, 300,-18, 370,-17, 400,-14, 420,-9, 445,-4, 462,-1.5, 490,-1, 510,-5, 530,-5, 548,0, 575,.4, 600,-5, 613,-10, 630,-3, 640,0, 675,1, 705,-3, 730,-8, 770,-16, 830,-18, 880,-17, 905,-12, 925,-13, 965,-18, 1040,-21, 1096,-19],
      [1100, 68,-20, 105,-21, 135,-18, 165,-15, 220,-13, 330,-12, 400,-13, 425,-10, 445,-5, 465,-1.5, 490,-1, 510,-7, 530,-9, 550,-2, 575,.4, 600,-6, 613,-11, 627,-5, 640,0, 670,1, 698,-4, 725,-12, 750,-14, 800,-13, 850,-12, 900,-11, 920,-12, 960,-15, 1000,-18, 1060,-21, 1096,-20],
      [1118, 68,-18, 130,-17, 165,-15, 215,-12, 310,-9, 360,-8, 420,-7, 440,-9, 455,-4, 475,-1, 500,-5, 525,-16, 545,-5, 565,0, 598,-6, 613,-11, 627,-6, 640,0, 668,1, 692,-3, 715,-9, 735,-12, 760,-9.5, 800,-8.5, 850,-8.5, 920,-11, 960,-14, 1000,-17, 1060,-19, 1096,-18],
      [1135, 68,-22, 110,-21, 140,-18, 163,-15, 212,-12, 305,-9, 370,-6.5, 430,-5, 455,-6, 475,-2.5, 500,-3, 525,-9, 545,-3, 565,0, 598,-6, 613,-10, 627,-5, 640,0, 665,1, 688,-3, 712,-8, 740,-7, 780,-8, 855,-9, 945,-12, 1000,-16, 1060,-22, 1096,-19],
      [1152, 68,-18, 110,-17.5, 150,-16, 175,-15, 207,-12, 282,-9, 400,-6, 440,-5, 465,-5.5, 480,-2.7, 500,-3, 525,-4, 545,-1, 570,0, 600,-5, 613,-8.5, 626,-4, 640,0, 665,.6, 690,-6, 720,-5.5, 755,-6, 850,-9, 948,-12, 1005,-15, 1060,-18, 1096,-18],
      [1170, 68,-22, 100,-23, 130,-18, 155,-15, 204,-12, 272,-9, 383,-6, 490,-3.3, 520,-1.5, 540,-1.5, 560,-.5, 600,-3.5, 613,-6, 625,-3, 640,-.2, 665,-.5, 690,-5.5, 720,-5, 757,-6, 845,-9, 950,-12, 1010,-15, 1050,-19, 1070,-22, 1096,-19],
      [1200, 68,-22, 95,-22, 125,-18, 155,-15, 212,-12, 315,-9, 388,-6, 500,-3, 530,-1.5, 550,-5, 568,-1, 580,-.5, 613,-3.1, 630,-.6, 660,-3, 700,-4.5, 760,-6, 870,-9, 950,-12, 1010,-15, 1055,-19, 1096,-24],
      [1220, 68,-26, 95,-20, 125,-18, 150,-15, 203,-12, 275,-9, 395,-6, 468,-3, 520,-.6, 550,-6, 568,-1, 580,0, 613,-2, 640,-.8, 655,-3, 700,-4, 795,-6, 883,-9, 950,-12, 1020,-15, 1060,-19, 1096,-26],
      [1240, 68,-37, 90,-22, 115,-18, 150,-15, 206,-12, 285,-9, 383,-6, 462,-3, 520,-1.5, 548,-5, 566,-1, 580,0, 613,-2, 640,-1, 675,-3, 775,-6, 870,-9, 950,-12, 1010,-15, 1050,-19, 1075,-24, 1096,-38],
      [1260, 68,-31, 90,-22, 115,-18, 150,-15, 220,-12, 305,-9, 405,-6, 468,-3, 515,-2, 535,-3.5, 560,-1, 580,0, 613,-3, 640,-2.5, 680,-3, 756,-6, 852,-9, 940,-12, 1010,-15, 1050,-19, 1075,-23, 1096,-30],
      [1275, 68,-32, 90,-22, 115,-18, 150,-15, 232,-12, 305,-9, 403,-6, 468,-3, 515,-3.2, 540,-2, 560,-.6, 580,0, 613,-3.2, 645,-3.3, 660,-2, 700,-3.2, 755,-6, 860,-9, 947,-12, 1010,-15, 1050,-19, 1075,-23, 1096,-31],
      [1295, 68,-22, 90,-20, 115,-18, 150,-15, 230,-12, 308,-9, 410,-6, 465,-3, 515,-.6, 580,.6, 620,-.8, 640,-2.5, 700,-3, 768,-6, 852,-9, 945,-12, 1010,-15, 1055,-19, 1096,-24],
      [1315, 68,-24, 95,-19, 135,-16, 160,-15, 238,-12, 308,-9, 398,-6, 452,-3, 530,.2, 580,1, 640,-.3, 713,-3, 770,-6, 853,-9, 935,-12, 1005,-15, 1050,-19, 1096,-24],
      [1350, 68,-23, 110,-19, 160,-17, 210,-15, 278,-12, 340,-9, 415,-6, 465,-3, 530,-.4, 580,.5, 640,-.4, 697,-3, 747,-6, 822,-9, 885,-12, 955,-15, 1010,-18, 1096,-24],
      ...tail.map(flip)
    ];

    const stops = [[10, 255, 255, 255], [0, 255, 0, 0], [-10, 255, 255, 0], [-20, 0, 255, 0], [-30, 0, 255, 255], [-40, 0, 0, 255], [-50, 255, 0, 255], [-60, 0, 0, 0]];
    function colour(v) {
      v = Math.max(-59.99, Math.min(9.99, v));
      const t = (10 - v) / 10, i = Math.floor(t), f = t - i, a = stops[i], b = stops[i + 1];
      return [1, 2, 3].map(k => a[k] + (b[k] - a[k]) * f);
    }
    function evalColumn(col, y) {
      if (y <= col[1]) return col[2];
      for (let i = 1; i < col.length - 2; i += 2)
        if (y <= col[i + 2]) return col[i + 1] + (col[i + 3] - col[i + 1]) * (y - col[i]) / (col[i + 2] - col[i]);
      return col[col.length - 1];
    }
    function blur(src, W, H, r, stepX) {
      const out = new Float32Array(W * H);
      for (let y = 0; y < H; y++) for (let x = 0; x < W; x++) {
        let s = 0;
        for (let k = -r; k <= r; k++) {
          const xx = stepX ? Math.max(0, Math.min(W - 1, x + k)) : x, yy = stepX ? y : Math.max(0, Math.min(H - 1, y + k));
          s += src[yy * W + xx];
        }
        out[y * W + x] = s / (2 * r + 1);
      }
      return out;
    }
    function drawMap(id, cols, x0, spots) {
      const cv = document.getElementById("map-" + id), W = cv.width, H = cv.height, ctx = cv.getContext("2d");
      let v = new Float32Array(W * H);
      for (let py = 0; py < H; py++) {
        const y = 68 + py * 1028 / (H - 1), row = cols.map(c => evalColumn(c, y));
        let k = 0;
        for (let px = 0; px < W; px++) {
          const x = x0 + px * (1488 - x0) / W;
          while (k < cols.length - 2 && x > cols[k + 1][0]) k++;
          // cubic through the neighbouring columns
          const a = cols[k][0], b = cols[k + 1][0], t = (x - a) / (b - a), h = b - a;
          const p = row[k], q = row[k + 1];
          const sl = (i, j) => (row[j] - row[i]) / (cols[j][0] - cols[i][0]);
          const m0 = k > 0 ? sl(k - 1, k + 1) : sl(k, k + 1), m1 = k < cols.length - 2 ? sl(k, k + 2) : sl(k, k + 1);
          const t2 = t * t, t3 = t2 * t;
          v[py * W + px] = (2 * t3 - 3 * t2 + 1) * p + (t3 - 2 * t2 + t) * h * m0 + (3 * t2 - 2 * t3) * q + (t3 - t2) * h * m1;
        }
      }
      v = blur(blur(v, W, H, 3, false), W, H, 2, true);
      v = blur(v, W, H, 2, false);
      for (let py = 0; py < H; py++) {
        const y = 68 + py * 1028 / (H - 1), d = Math.abs(y - 582);
        const nx = 1449 + Math.max(0, 250 - d) * .33, amp = 27 * Math.max(0, Math.min(1, (d - 150) / 60));
        for (let px = 0; px < W; px++) {
          const x = x0 + px * (1488 - x0) / W, i = py * W + px;
          v[i] -= amp * Math.exp(-Math.abs(x - nx) / 9);
          if (x > 1150 && x < 1380) v[i] += Math.min(1, d / 300) * (.08 * Math.sin(x * .37) + .08 * Math.sin(x * .61 + y * .01));
          for (const [sx, sy, rx, ry, a] of spots) v[i] += a * Math.exp(-(((x - sx) / rx) ** 2) - ((y - sy) / ry) ** 2);
        }
      }
      const img = ctx.createImageData(W, H);
      for (let py = 0; py < H; py++) for (let px = 0; px < W; px++) {
        const i = py * W + px, c = colour(v[i]), l = Math.floor(v[i] / 3);
        let dark = 1;
        for (const j of [px < W - 1 ? i + 1 : i, py < H - 1 ? i + W : i]) {
          const m = Math.floor(v[j] / 3);
          if (m !== l && Math.max(m, l) <= -1 && Math.max(m, l) >= -14) dark = .64;
        }
        for (let k = 0; k < 3; k++) img.data[i * 4 + k] = c[k] * dark;
        img.data[i * 4 + 3] = 255;
      }
      ctx.putImageData(img, 0, 0);
    }
    drawMap("hor", hor.map(flip), 78, []);
    drawMap("ver", ver, 87, [[1118, 525, 6, 18, -20], [1055, 984, 9, 12, -10]]);
  </script>
</body>
</html>
